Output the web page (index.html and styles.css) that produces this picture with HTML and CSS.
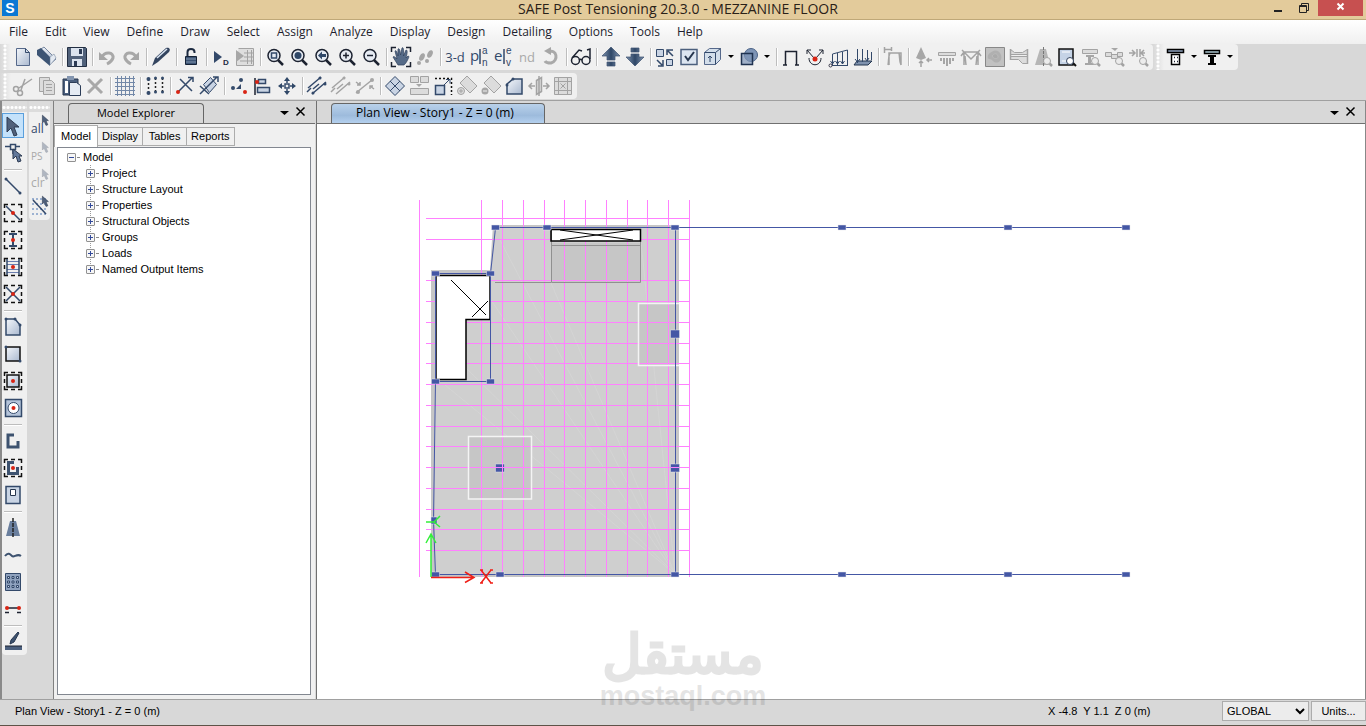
FILE: index.html
```
<!DOCTYPE html>
<html lang="en">
<head>
<meta charset="utf-8">
<title>SAFE Post Tensioning 20.3.0 - MEZZANINE FLOOR</title>
<link rel="stylesheet" href="styles.css">
</head>
<body>
<svg class="defs" aria-hidden="true">
  <defs>
    <linearGradient id="steel" x1="0" y1="0" x2="1" y2="1"><stop offset="0" stop-color="#f4f7fb"/><stop offset="1" stop-color="#a9b8cf"/></linearGradient>
    <linearGradient id="deep" x1="0" y1="0" x2="1" y2="0"><stop offset="0" stop-color="#7f93af"/><stop offset=".5" stop-color="#2f4767"/><stop offset="1" stop-color="#7f93af"/></linearGradient>
    <g id="lens"><path class="k w2" d="M15 15l5 5"/><circle cx="11" cy="10.500" r="6" fill="#e6ebf3" stroke="#1c2230" stroke-width="1.500"/></g>
    <g id="glens"><path class="g w2" d="M18 18l3 3"/><circle cx="16" cy="16" r="3.500" fill="#ececec" stroke="#a3a3a3"/></g>
    <path id="arrow" d="M4 2v13l3-3 3 7 3-1-3-7h4z" fill="#50617c" stroke="#2d3b52"/>
    <path id="frame" d="M3.500 7V3.500H7M10 3.500h4M17 3.500h3.500V7M20.500 10v4M20.500 17v3.500H17M14 20.500h-4M7 20.500H3.500V17M3.500 14v-4" fill="none" stroke="#111" stroke-width="1.500"/>
    <path id="drop" d="M3 10h6l-3 3z" fill="#000"/>
  </defs>
</svg>

<header class="titlebar">
  <svg class="app-icon" viewBox="0 0 16 16" role="img" aria-label="SAFE"><rect width="16" height="16" fill="#0a78d4"/><text x="8" y="13" text-anchor="middle" class="app-letter">S</text></svg>
  <h1 class="title">SAFE Post Tensioning 20.3.0 - MEZZANINE FLOOR</h1>
  <div class="window-buttons">
    <button class="wb" aria-label="Minimize"><svg width="26" height="16"><path d="M8 9h8" stroke="#222" stroke-width="2"/></svg></button>
    <button class="wb" aria-label="Restore"><svg width="26" height="16"><path d="M7.500 3.500h7v7h-7zM7 4.500h8M9.500 3V1.500h7v7H15" fill="none" stroke="#222"/></svg></button>
    <button class="wb close" aria-label="Close"><svg width="45" height="16"><path d="M19.500 3.500l6 6M25.500 3.500l-6 6" stroke="#fff" stroke-width="2"/></svg></button>
  </div>
</header>

<nav class="menubar" aria-label="Main menu">
  <button>File</button><button>Edit</button><button>View</button><button>Define</button><button>Draw</button><button>Select</button><button>Assign</button><button>Analyze</button><button>Display</button><button>Design</button><button>Detailing</button><button>Options</button><button>Tools</button><button>Help</button>
</nav>

<div class="toolbars">
  <div class="toolrow">
    <div class="strip" role="toolbar" aria-label="Standard">
      <span class="grip"></span>
      <button aria-label="New model"><svg><path d="M5.500 3.500h9l4 4v13h-13z" fill="url(#steel)" stroke="#55688a"/><path class="n" d="M14.500 3.500v4h4"/></svg></button>
      <button aria-label="Open"><svg><path d="M3 6l6-4 12 12-6 5z" fill="url(#steel)" stroke="#7888a0"/><path d="M2 5l4-2 9 9v9L2 10z" fill="#3c5474"/><path d="M15 12l4-3 2 4-6 7z" fill="#e4eaf2" stroke="#667890" stroke-width=".5"/></svg></button>
      <i class="sep"></i>
      <button aria-label="Save"><svg><path d="M2.500 2.500h18l1 1v18h-19z" fill="#50617a" stroke="#222e42"/><path fill="#dbe3ee" d="M6 3h12v8H6zM7 14h10v7H7z"/><path fill="#2c3b54" d="M14 4h3v5h-3zM9 16h3v5H9z"/></svg></button>
      <i class="sep"></i>
      <button aria-label="Undo"><svg><path d="M7 12c3-6 12-5 11 1-1 3-4 5-6 6" fill="none" stroke="#a8a8a8" stroke-width="3"/><path class="gf" d="M4 7v8h9z"/></svg></button>
      <button aria-label="Redo"><svg><path d="M17 12c-3-6-12-5-11 1 1 3 4 5 6 6" fill="none" stroke="#a8a8a8" stroke-width="3"/><path class="gf" d="M20 7v8h-9z"/></svg></button>
      <i class="sep"></i>
      <button aria-label="Edit"><svg><path d="M3 21l3-8L17 3c3-1 5 1 3 4L9 17z" fill="#33445f"/><path d="M8 13l10-9" stroke="#dce6f3" stroke-width="1.500"/></svg></button>
      <i class="sep"></i>
      <button aria-label="Lock model"><svg><path d="M8.500 12V7c0-4 7-4 7 0v1" fill="none" stroke="#1c2a40" stroke-width="2"/><path d="M6.500 11.500h11v8h-11z" fill="#3c5474" stroke="#152236"/><path d="M7 14h10M7 17h10" stroke="#8094ae"/></svg></button>
      <i class="sep"></i>
      <button aria-label="Run analysis and design"><svg><path fill="#33496a" d="M5 6l8 6-8 6z"/><text x="14" y="20" class="mini">D</text></svg></button>
      <button aria-label="Run report"><svg><path d="M5.500 3.500h15v17H3.500v-6" fill="#dedede" stroke="#a3a3a3"/><path class="g" d="M11 8h10M11 12h10M7 16h14M14.500 5v14M18.500 5v14"/><path class="gf" d="M3 5l8 6-8 6z"/></svg></button>
      <i class="sep"></i>
      <button aria-label="Rubber band zoom"><svg><use href="#lens"/><path class="n w15" d="M8.500 8h5v5h-5z"/></svg></button>
      <button aria-label="Restore full view"><svg><use href="#lens"/><circle cx="11" cy="10.500" r="3.500" fill="#2f4767"/></svg></button>
      <button aria-label="Previous zoom"><svg><use href="#lens"/><path fill="#2f4767" d="M7 10.500l4-4V9h4v3h-4v2.500z"/></svg></button>
      <button aria-label="Zoom in"><svg><use href="#lens"/><path class="k w15" d="M8 10.500h6M11 7.500v6"/></svg></button>
      <button aria-label="Zoom out"><svg><use href="#lens"/><path class="k w15" d="M8 10.500h6"/></svg></button>
      <i class="sep"></i>
      <button aria-label="Pan"><svg><path class="k w15" d="M2.500 7V2.500H7M17 2.500h4.500V7M21.500 17v4.500H17M7 21.500H2.500V17"/><path d="M9 20l-5-8c1-1 2 0 4 2L6 6c1-1 2 0 3 5V4c1-1 2 0 2.500 6l1.500-7c1-1 2 0 1.500 8L17 5c2 0 1 4 0 8l2-2c2 0 0 3-1 5-1 2-2 3-3 4z" fill="#566b88" stroke="#2c3e59" stroke-width=".7"/></svg></button>
      <button aria-label="Walk"><svg class="gf"><ellipse cx="17" cy="9" rx="2.500" ry="4" transform="rotate(25 17 9)"/><ellipse cx="9" cy="12" rx="2.500" ry="4" transform="rotate(25 9 12)"/><circle cx="6" cy="18" r="2"/><circle cx="14" cy="16" r="2"/></svg></button>
      <i class="sep"></i>
      <button class="word" aria-label="3-d view">3-d</button>
      <button aria-label="Plan view"><svg><text x="3" y="16" class="glyph m">p</text><path class="n w15" d="M13 4v15"/><text x="15" y="9" class="glyph s">a</text><text x="15" y="21" class="glyph s">n</text></svg></button>
      <button aria-label="Elevation view"><svg><text x="3" y="16" class="glyph m">e</text><path class="n w15" d="M13 4v15"/><text x="15" y="9" class="glyph s">e</text><text x="15" y="21" class="glyph s">v</text></svg></button>
      <button class="word off" aria-label="nd view">nd</button>
      <button aria-label="Rotate view"><svg><path d="M9 7c9-4 11 9 3 11-3 0-5 0-6-2" fill="none" stroke="#a9a9a9" stroke-width="3"/><path class="gf" d="M5 6l7-4v8z"/></svg></button>
      <i class="sep"></i>
      <button aria-label="Perspective"><svg class="k w15"><circle cx="6.500" cy="15.500" r="4"/><circle cx="17" cy="15.500" r="4"/><path d="M3 13l7-8 3 1M21 14V4l-3 1M10 15c1-1 2-1 3 0"/></svg></button>
      <i class="sep"></i>
      <button aria-label="Move up"><svg><path fill="url(#deep)" stroke="#3d5270" stroke-width=".7" d="M12 2l9 9h-5v4H8v-4H3zM8 17h8v4H8z"/></svg></button>
      <button aria-label="Move down"><svg><path fill="url(#deep)" stroke="#3d5270" stroke-width=".7" d="M12 21l9-9h-5V9H8v3H3zM8 3h8v4H8z"/></svg></button>
      <i class="sep"></i>
      <button aria-label="Object shrink"><svg><path class="n lf" d="M3.500 4.500h7v7h-7zM13.500 14.500h6v6h-6z"/><path class="n w15" d="M20 11l-5-5M14 10V5h6M4 15l5 5M10 15v6H5"/></svg></button>
      <button aria-label="Set display options"><svg><path d="M4 4.500h16v15H4z" fill="#dce5f0" stroke="#4b5f7d" stroke-width="1.500"/><path d="M8 11l3 4 6-8" fill="none" stroke="#26364e" stroke-width="2"/></svg></button>
      <button aria-label="Assign display"><svg><path d="M3.500 7.500l5-4h11v11l-5 5h-11z" fill="#d3deea" stroke="#55688a"/><path class="n" d="M3.500 7.500h11v12M14.500 7.500l5-4M9 17v-6M7 13l2-2 2 2"/></svg></button>
      <button class="dd" aria-label="More display"><svg><use href="#drop"/></svg></button>
      <button aria-label="Object view"><svg><circle cx="14" cy="10" r="6.500" fill="#7d94b6" stroke="#4b6388"/><path d="M4.500 8.500h11v11h-11z" fill="#7d94b6" fill-opacity=".7" stroke="#1f3250" stroke-width="1.500"/></svg></button>
      <button class="dd" aria-label="More views"><svg><use href="#drop"/></svg></button>
      <i class="sep"></i>
      <button aria-label="Undeformed shape"><svg><path class="k w15" d="M4 20h4M16 20h4M6.500 20V6.500h11V20"/></svg></button>
      <button aria-label="Joint loads"><svg><path class="k" d="M4 5l7 8M20 5l-7 8M4 9V5h4M20 9V5h-4M6 13c0 9 12 9 12 0"/><circle class="r" cx="12" cy="14" r="2.500"/></svg></button>
      <button aria-label="Frame loads"><svg><path class="n" d="M3 20.500h18M5.500 20V9l15-4v15M10.500 8v12M15.500 7v12M3.500 16l2 3 2-3M8.500 16l2 3 2-3M13.500 16l2 3 2-3"/><circle cx="3.500" cy="20.500" r="1.500" fill="#fff" stroke="#334"/></svg></button>
      <button aria-label="Slab loads"><svg><path d="M3 20l3-4h15l-4 4z" fill="#7f92ae" stroke="#243650"/><path class="n" d="M6.500 4v14M11.500 4v13M16.500 5v11M20.500 7v8M4 14l2.500 3L9 14M14 13l2 3 2-3"/></svg></button>
      <i class="sep"></i>
      <button aria-label="Deformed shape"><svg class="g w15"><path d="M3.500 2v6M3.500 4.500h7M10.500 2v4M8 20V8h12v12M7 20c1-5 0-8 2-12M18 8c1 4 0 8 2 12"/></svg></button>
      <i class="sep"></i>
      <button aria-label="Reactions"><svg><path class="gf" d="M10 2l5 11-5 2-5-2z"/><path class="g w15" d="M10 22v-6M8 18l2-2 2 2M21 15h-5M18 13l-2 2 2 2"/></svg></button>
      <button aria-label="Soil pressure"><svg><path d="M3.500 7.500h17v3h-17z" class="g lg"/><path class="gf" d="M5 13h2v3H5zM8 13h2v6H8zM11 13h2v8h-2zM14 13h2v6h-2zM17 13h2v3h-2z"/></svg></button>
      <button aria-label="Frame forces"><svg class="g w15"><path d="M5 20V7h14v13M3 5l2 2-3 4M21 5l-2 2 3 4M5 7l7 7 7-7M7 20l-1-9M17 20l1-9"/></svg></button>
      <button aria-label="Slab stresses"><svg><path d="M2.500 2.500h19v19h-19z" fill="#c1c1c1" stroke="#888"/><path fill="#b0b0b0" d="M5 10c5-6 11-6 13 0s-4 10-8 6-6 0-5-6z"/><path d="M9 11c2-3 5-3 6 0s-4 4-6 0z" fill="#aaa" stroke="#bbb"/></svg></button>
      <button aria-label="Strip forces"><svg><path class="g lg" d="M3.500 4.500l4 3h8l5-3v5h-17zM3.500 11.500h17v7h-5l-4-4h-8z"/><path class="g w15" d="M3.500 4v11M20.500 4v15"/></svg></button>
      <button aria-label="Punching shear"><svg><path fill="#b6b6b6" d="M9 4h6l4 16H4z"/><path d="M12.500 2v20" stroke="#777" stroke-dasharray="3 1"/><use href="#glens"/></svg></button>
      <button aria-label="Slab design"><svg><path d="M4 4h14v16H4z" fill="#c5d3e6" stroke="#111" stroke-width="1.500"/><path d="M7 7h8M7 16h5" stroke="#fff"/><path d="M17 17l4 4" stroke="#111" stroke-width="2"/><circle cx="15" cy="16" r="3.500" fill="#fff" stroke="#34445f"/></svg></button>
      <button aria-label="Beam design"><svg><path class="g lg" d="M3.500 4.500h15v4h-15z"/><path class="gf" d="M7 10h8v2h-3v6h3v2H6v-2h3v-6H7z"/><use href="#glens"/></svg></button>
      <button aria-label="Section cut"><svg><path class="g lg" d="M2.500 7.500h6v4h-6zM8.500 9.500h6v4h-6zM14.500 7.500h5v4h-5z"/><path class="gf" d="M8 3h7l-3 3z"/><use href="#glens"/></svg></button>
      <button aria-label="Crack width"><svg><path class="g w15" d="M2 8h6M18 8h-4M10 4v8M13 4v8M5 5l3 3-3 3M17 5l-3 3 3 3"/><use href="#glens"/></svg></button>
    </div>
    <div class="strip second" role="toolbar" aria-label="Detailing">
      <span class="grip"></span>
      <button aria-label="Column section"><svg><path d="M3.500 4.500h16v3h-16z" fill="#8fa2be" stroke="#000" stroke-width="1.500"/><path d="M7.500 9.500h8v10h-8z" fill="#fff" stroke="#000" stroke-width="1.500"/><path class="k w15" stroke-dasharray="1 2" d="M10 12.500h4M10 16.500h4"/></svg></button>
      <button class="dd" aria-label="Column options"><svg><use href="#drop"/></svg></button>
      <button aria-label="Beam section"><svg><path d="M4.500 5.500h15v3h-15z" fill="#a9c3cc" stroke="#000" stroke-width="1.500"/><path d="M8 10h8v2h-2v6h2v2H8v-2h2v-6H8z"/></svg></button>
      <button class="dd" aria-label="Beam options"><svg><use href="#drop"/></svg></button>
    </div>
  </div>
  <div class="toolrow">
    <div class="strip" role="toolbar" aria-label="Edit">
      <span class="grip"></span>
      <button aria-label="Cut"><svg class="g w15"><path d="M8 14l13-9M10 16l4-11"/><circle cx="5" cy="15" r="2.500"/><circle cx="9" cy="19" r="2.500"/></svg></button>
      <button aria-label="Copy"><svg class="g"><path class="lg" d="M4.500 3.500h10v14h-10z"/><path class="lg" d="M8.500 6.500h8l3 3v11h-11z"/><path d="M11 10.500h6M11 13.500h6M11 16.500h6"/></svg></button>
      <button aria-label="Paste"><svg><path d="M4 5h15v16H4z" fill="#4a5f7e" stroke="#26364e"/><path fill="#8496b0" d="M8 2h7v4H8z"/><path fill="#fff" d="M6 7h3v12H6z"/><path d="M10.500 8.500h7l4 3v10h-11z" fill="#e5ebf3" stroke="#2b3c57"/></svg></button>
      <button aria-label="Delete"><svg><path d="M5 5l14 14M19 5L5 19" fill="none" stroke="#a8a8a8" stroke-width="3"/></svg></button>
      <i class="sep"></i>
      <button aria-label="Edit grid"><svg><path stroke="#7288a8" fill="none" d="M2 4.500h20M2 8.500h20M2 12.500h20M2 16.500h20M2 20.500h20M4.500 2v20M8.500 2v20M12.500 2v20M16.500 2v20M20.500 2v20"/></svg></button>
      <i class="sep"></i>
      <button aria-label="Replicate"><svg><path d="M5.500 5v14M12.500 4v14M19.500 4v14" stroke="#222" stroke-width="1.500" stroke-dasharray="2 2"/><g fill="#344b6b"><circle cx="5.500" cy="5" r="2"/><circle cx="5.500" cy="19" r="2"/><circle cx="12.500" cy="4" r="1.500"/><circle cx="12.500" cy="18" r="1.500"/><circle cx="19.500" cy="4" r="1.500"/><circle cx="19.500" cy="18" r="1.500"/></g></svg></button>
      <i class="sep"></i>
      <button aria-label="Extrude points"><svg><path class="n w15" d="M5 18L19 4M15 3.500h5V8M7 5l12 12"/><circle class="r" cx="5" cy="18" r="2"/></svg></button>
      <button aria-label="Extrude lines"><svg><path class="n lf" d="M6.500 10.500l7-7 6 7-7 8z"/><path class="n w15" d="M3 12l9 8M3 20L20 3M16 3h5v5"/></svg></button>
      <i class="sep"></i>
      <button aria-label="Merge joints"><svg><path class="nf" d="M9 15l5-5v5z"/><g fill="#344b6b"><circle cx="6" cy="14" r="2"/><circle cx="14" cy="6" r="2"/></g><circle class="r" cx="18" cy="18" r="2"/></svg></button>
      <button aria-label="Align joints"><svg><path class="k w15" d="M4 4v17"/><path class="n lf w15" d="M7.500 5.500h7v4h-7zM6.500 13.500h12v5h-12z"/><circle class="r" cx="6" cy="8" r="2"/></svg></button>
      <button aria-label="Move joints"><svg><path fill="#2f4767" d="M12 3l3 4H9zM12 21l3-4H9zM3 12l4-3v6zM21 12l-4-3v6z"/><path class="n w15" d="M10 10h4v4h-4zM12 6v3M12 15v3M6 12h3M15 12h3"/></svg></button>
      <i class="sep"></i>
      <button aria-label="Divide lines"><svg><path class="n w15" d="M3 14L16 3M7 20L21 8M8 15l6-5M2 18l4-4"/><circle class="nf" cx="15" cy="4" r="1.500"/><circle class="nf" cx="20" cy="10" r="1.500"/><circle class="nf" cx="8" cy="19" r="1.500"/></svg></button>
      <button aria-label="Join lines"><svg><path class="g w15" d="M3 14L16 3M7 20L21 8M8 15l6-5M2 18l4-4"/><circle class="gf" cx="15" cy="4" r="1.500"/><circle class="gf" cx="20" cy="10" r="1.500"/></svg></button>
      <button aria-label="Trim lines"><svg><path class="g w15" d="M3 19l6-5 10-8M3 8l4 3M7 8v3H4M21 15l-4-3M17 15v-3h3"/><circle class="gf" cx="19" cy="6" r="2"/><circle class="gf" cx="5" cy="18" r="2"/></svg></button>
      <i class="sep"></i>
      <button aria-label="Divide areas"><svg><path class="n lf" d="M2.500 12L12 2.500l9.500 9.500-9.500 9.500zM7 7l10 10M17 7L7 17"/></svg></button>
      <button aria-label="Merge areas"><svg><path class="g lg" d="M3.500 2.500h8v6h-8zM13.500 2.500h8v6h-8zM3.500 14.500h18v6h-18z"/><path class="gf" d="M9 10h6l-3 3z"/></svg></button>
      <button aria-label="Expand areas"><svg><path d="M4 4.500h16.500V21" fill="none" stroke="#111" stroke-width="1.500" stroke-dasharray="2 2"/><path class="n lf w15" d="M4.500 11.500h9v9h-9z"/><path class="n" d="M13 11l6-6M15 5.500h4v4"/></svg></button>
      <button aria-label="Add to area"><svg><path class="g lg" d="M5 9l7-7 10 10-7 7z"/><circle class="g lg" cx="6" cy="17" r="3.500"/><path class="g" d="M4 17h4M6 15v4"/></svg></button>
      <button aria-label="Remove from area"><svg><path class="g lg" d="M5 9l7-7 10 10-7 7z"/><circle class="gf" cx="6" cy="17" r="3.500"/><path stroke="#eee" d="M4 17h4"/></svg></button>
      <button aria-label="Area edges"><svg><path d="M4 10l6-5h9v15H4z" fill="url(#steel)" stroke="#33496a" stroke-width="1.500"/><circle class="nf" cx="4" cy="11" r="1.500"/><circle class="nf" cx="10" cy="5" r="1.500"/></svg></button>
      <button aria-label="Mirror"><svg class="g w15"><path class="lg" d="M9.500 6.500l5-3v14l-5 3z"/><path d="M3 12h5M5 9l-3 3 3 3M12 2v20M21 12h-5M19 9l3 3-3 3"/></svg></button>
      <button aria-label="Area mesh"><svg class="g"><path class="lg" d="M3.500 3.500h17v17h-17z"/><path d="M7.500 7.500h9v9h-9zM7.500 4v16M16.500 4v16M4 7.500h16M4 16.500h16M9.500 9.500l5 5M14.500 9.500l-5 5"/></svg></button>
    </div>
  </div>
</div>

<div class="workspace">
  <aside class="dock">
    <div class="vstrip" role="toolbar" aria-label="Draw">
      <span class="hgrip"></span>
      <button class="on" aria-label="Select object"><svg><path transform="translate(3 1)" d="M3 2v15l4-4 3 8 3-1-3-8h5z" fill="#50617c" stroke="#2d3b52"/></svg></button>
      <button aria-label="Reshape object"><svg><path class="n w15" d="M4 5.500h5M14 5.500h5M9.500 3.500h5v5h-5zM12 9v4"/><path transform="translate(9 7)" d="M3 1v10l3-3 2 6 3-1-2-5h3z" fill="#62789a" stroke="#2d3b52"/></svg></button>
      <i class="vsep"></i>
      <button aria-label="Draw line"><svg><path class="n w15" d="M5 5l14 14"/><circle class="nf" cx="5" cy="5" r="1.500"/><circle class="nf" cx="19" cy="19" r="1.500"/></svg></button>
      <button aria-label="Quick draw line"><svg><use href="#frame"/><path class="n w15" d="M5 5l14 14"/><circle class="r" cx="12" cy="12" r="2"/></svg></button>
      <button aria-label="Quick draw column"><svg><use href="#frame"/><path class="nf" d="M8 5h8v2h-3v10h3v2H8v-2h3V7H8z"/><circle class="r" cx="12" cy="12" r="2"/></svg></button>
      <button aria-label="Quick draw secondary beams"><svg><use href="#frame"/><path stroke="#6c7fb0" d="M6 6.500h12M6 9.500h12M6 14.500h12M6 17.500h12"/><path class="n w15" d="M6 4v16M18 4v16"/><circle class="r" cx="12" cy="12" r="2"/></svg></button>
      <button aria-label="Quick draw braces"><svg><use href="#frame"/><path class="n w15" d="M5 5l14 14M19 5L5 19"/><circle class="r" cx="12" cy="12" r="2"/></svg></button>
      <i class="vsep"></i>
      <button aria-label="Draw slab"><svg><path d="M5 4h9l5 6v10H5z" fill="url(#steel)" stroke="#33496a" stroke-width="1.500"/><circle class="nf" cx="5" cy="4" r="1.500"/><circle class="nf" cx="14" cy="4" r="1.500"/><circle class="nf" cx="19" cy="10" r="1.500"/></svg></button>
      <button aria-label="Draw rectangular slab"><svg><path d="M5 5h14v14H5z" fill="url(#steel)" stroke="#111" stroke-width="1.500"/><circle class="nf" cx="5" cy="5" r="1.500"/><circle class="nf" cx="19" cy="19" r="1.500"/></svg></button>
      <button aria-label="Quick draw slab"><svg><use href="#frame"/><path d="M6 6h12v12H6z" fill="url(#steel)" stroke="#111" stroke-width="1.500"/><circle class="r" cx="12" cy="12" r="2"/></svg></button>
      <button aria-label="Quick draw around point"><svg><path d="M4.500 3.500h16v17h-16z" fill="#b5c4da" stroke="#33496a" stroke-width="1.500"/><circle cx="12.500" cy="12" r="5.500" fill="#fff" stroke="#33496a"/><circle class="r" cx="12.500" cy="12" r="2"/></svg></button>
      <i class="vsep"></i>
      <button aria-label="Draw wall"><svg><path d="M13 6H7v12h10v-6" fill="none" stroke="#3d526f" stroke-width="3"/></svg></button>
      <button aria-label="Quick draw wall"><svg><use href="#frame"/><path d="M13 6.500H7.500v11h9V11" fill="none" stroke="#3d526f" stroke-width="3"/><circle class="r" cx="12" cy="12" r="2"/></svg></button>
      <button aria-label="Draw opening"><svg><path class="n lf w15" d="M5 3.500h14v17H5z"/><path d="M9.500 6.500h5v6h-5z" fill="#fff" stroke="#26364e"/></svg></button>
      <i class="vsep"></i>
      <button aria-label="Draw strip"><svg><path fill="#6a7f9e" d="M9 5h6l4 15H5z"/><path d="M12 2v20" stroke="#222" stroke-width="1.500" stroke-dasharray="4 1"/></svg></button>
      <button aria-label="Draw tendon"><svg><path d="M4 13c3-4 5-2 7 0s5-3 9 0" fill="none" stroke="#3d526f" stroke-width="2"/></svg></button>
      <button aria-label="Draw piles"><svg><path d="M4.500 3.500h15v17h-15z" fill="#8fa2be" stroke="#33496a"/><path class="n lf" d="M6.500 6.500h2v2h-2zM11 6.500h2v2h-2zM15.500 6.500h2v2h-2zM6.500 11h2v2h-2zM11 11h2v2h-2zM15.500 11h2v2h-2zM6.500 15.500h2v2h-2zM11 15.500h2v2h-2zM15.500 15.500h2v2h-2z"/></svg></button>
      <button aria-label="Draw dimension"><svg><path class="k w15" d="M6 11h12M4 15.500h4M16 15.500h4"/><circle class="r" cx="6" cy="11" r="2"/><circle class="r" cx="18" cy="11" r="2"/></svg></button>
      <i class="vsep"></i>
      <button aria-label="Draw sketch"><svg><path d="M9 14l1-4 7-8 1 1-5 9z" fill="#3d526f" stroke="#26364e"/><path fill="#4b5f7d" d="M4 16h17v4H4z"/><path class="k" d="M4 16h17"/></svg></button>
    </div>
    <div class="vstrip narrow" role="toolbar" aria-label="Select">
      <span class="hgrip"></span>
      <button aria-label="Select all"><svg><text x="1" y="19" class="glyph xs">all</text><use href="#arrow" transform="translate(10 0) scale(.6)"/></svg></button>
      <button aria-label="Previous selection"><svg><text x="1" y="19" class="glyph off ps">PS</text><use href="#arrow" opacity=".4" transform="translate(10 0) scale(.6)"/></svg></button>
      <button aria-label="Clear selection"><svg><text x="1" y="19" class="glyph off xs">clr</text><use href="#arrow" opacity=".4" transform="translate(10 0) scale(.6)"/></svg></button>
      <button aria-label="Select by intersecting line"><svg><path stroke="#9db2d2" stroke-width="2" stroke-dasharray="2 2" d="M2 4h14M2 9h14M2 14h14M2 19h14"/><path class="n w15" d="M3 5l13 14"/><use href="#arrow" transform="translate(10 0) scale(.6)"/></svg></button>
    </div>
  </aside>

  <section class="explorer" aria-label="Model Explorer">
    <div class="panehead">
      <h2 class="panetab">Model Explorer</h2>
      <div class="panetools">
        <button aria-label="Explorer menu"><svg width="16" height="16"><path d="M3 7h9l-4.500 4z"/></svg></button>
        <button aria-label="Close explorer"><svg width="16" height="16"><path d="M3.500 3.500l8 8M11.500 3.500l-8 8" stroke="#000" stroke-width="1.500"/></svg></button>
      </div>
    </div>
    <div class="tabs" role="tablist">
      <button role="tab" aria-selected="true" class="active">Model</button><button role="tab">Display</button><button role="tab">Tables</button><button role="tab">Reports</button>
    </div>
    <div class="treebox">
      <div class="node root"><button class="tog" aria-label="Collapse Model"></button><span>Model</span></div>
      <ul class="tree">
        <li class="node"><button class="tog plus" aria-label="Expand Project"></button><span>Project</span></li>
        <li class="node"><button class="tog plus" aria-label="Expand Structure Layout"></button><span>Structure Layout</span></li>
        <li class="node"><button class="tog plus" aria-label="Expand Properties"></button><span>Properties</span></li>
        <li class="node"><button class="tog plus" aria-label="Expand Structural Objects"></button><span>Structural Objects</span></li>
        <li class="node"><button class="tog plus" aria-label="Expand Groups"></button><span>Groups</span></li>
        <li class="node"><button class="tog plus" aria-label="Expand Loads"></button><span>Loads</span></li>
        <li class="node"><button class="tog plus" aria-label="Expand Named Output Items"></button><span>Named Output Items</span></li>
      </ul>
    </div>
  </section>

  <main class="view">
    <div class="panehead">
      <h2 class="panetab blue">Plan View - Story1 - Z = 0 (m)</h2>
      <div class="panetools">
        <button aria-label="View menu"><svg width="16" height="16"><path d="M3 7h9l-4.500 4z"/></svg></button>
        <button aria-label="Close view"><svg width="16" height="16"><path d="M3.500 3.500l8 8M11.500 3.500l-8 8" stroke="#000" stroke-width="1.500"/></svg></button>
      </div>
    </div>
    <svg class="plan" role="img" aria-label="Plan of Story1">
      <g transform="translate(-317 -124)">
        <path d="M493 225H679V577H431V270H490z" fill="#c6c6c6"/>
        <path d="M496 228H676V574H435V274H491z" fill="#cfcfcf"/>
        <g fill="none" stroke="#d4d4d4"><path d="M675 574L445 385M675 574L466 368M675 574L491 300M675 574L500 240M675 574L551 283M675 574L641 242"/></g>
        <path d="M551 243h90v39h-90zM638 303h41v62h-41z" fill="#c6c6c6"/>
        <path d="M468.500 436.500h63v62h-63z" fill="#c6c6c6"/>
        <g fill="#ff80ff" class="grid">
          <path d="M419 200h1v377h-1zM481 200h1v377h-1zM502 200h1v377h-1zM523 200h1v377h-1zM544 200h1v377h-1zM564 200h1v377h-1zM585 200h1v377h-1zM606 200h1v377h-1zM627 200h1v377h-1zM647 200h1v377h-1zM668 200h1v377h-1zM689 200h1v377h-1z"/>
          <path d="M426 218h264v1H426zM426 239h264v1H426zM426 280h264v1H426zM426 301h264v1H426zM426 322h264v1H426zM426 343h264v1H426zM426 363h264v1H426zM426 384h264v1H426zM426 405h264v1H426zM426 426h264v1H426zM426 446h264v1H426zM426 467h264v1H426zM426 488h264v1H426zM426 509h264v1H426zM426 529h264v1H426zM426 550h264v1H426z"/>
        </g>
        <path d="M551 229h89v12h-89zM436 276h54v43h-24v60h-30z" fill="#fff"/>
        <g fill="none" stroke="#909090"><path d="M551.500 229v53.500h89V241M551 245.500h90M495 282.500h56"/></g>
        <g fill="none" stroke="#f4f4f4" stroke-width="1.500"><path d="M679 303.500h-40.500v62H679M468.500 436.500h63v62.500h-63z"/></g>
        <g fill="none" stroke="#000"><path stroke-width="1.500" d="M551 229.500h89.500v11.500H551zM436 275.500h54v44h-24v60h-30z"/><path d="M560 230l73 10M560 240l73-10M451 280l35 35M488 301l-16 16"/></g>
        <path d="M495.500 227.500H1126M495.500 228l-5 45.500h-55M490.500 273.500v108h-55M435.500 273.500v108l-2 139 2 54H1126M675.500 228V574" fill="none" stroke="#4457a5"/>
        <g fill="#4457a5" stroke="#e6e6ea" stroke-width=".5">
          <path d="M491.500 225h8v5h-8zM543 225h8v5h-8zM671 225h8v5h-8zM431.500 271h8v5h-8zM486.500 271h8v5h-8zM431.500 379h8v5h-8zM486.500 379h8v5h-8zM670.500 330h9v8h-9zM670.500 464h9v8h-9zM495.500 464h9v8h-9zM431 517h6v7h-6zM431.500 572h8v5h-8zM496 572h8v5h-8zM671 572h8v5h-8zM838 225h8v5h-8zM1004 225h8v5h-8zM1122 225h8v5h-8zM838 572h8v5h-8zM1004 572h8v5h-8zM1122 572h8v5h-8z"/>
        </g>
        <path d="M495 467.500h10M671 467.500h8M502.500 464v8" stroke="#ff80ff"/>
        <g fill="none" stroke="#33f03a" stroke-width="1.500"><path d="M431 577V534M426 543l5-9 5 9M426 522h8l6-6M434 522l6 5"/></g>
        <g fill="none" stroke="#f02018" stroke-width="1.500"><path d="M431 577.500h43M465 572l9 5.500-9 5M481 570l10 13M491 570l-10 13M480 570h3M490 570h3M480 583h3M490 583h3"/></g>
      </g>
    </svg>
  </main>
</div>

<footer class="status">
  <span class="where">Plan View - Story1 - Z = 0 (m)</span>
  <span class="coords">X -4.8&nbsp; Y 1.1&nbsp; Z 0 (m)</span>
  <select aria-label="Coordinate system"><option>GLOBAL</option></select>
  <button>Units...</button>
</footer>
<div class="watermark"><span class="wm-ar" lang="ar" dir="rtl">مستقل</span><span class="wm-en">mostaql.com</span></div>
</body>
</html>
```
FILE: styles.css
```
* { box-sizing: border-box; }
html, body { height: 100%; }
body {
  margin: 0; display: flex; flex-direction: column; min-height: 0; overflow: hidden; position: relative;
  background: #d8d8d8; color: #000; font: 11px/16px "Liberation Sans", Arial, sans-serif;
  border-bottom: 1px solid #5e5348;
}
button { border: 0; padding: 0; margin: 0; background: none; color: inherit; font: inherit; }
h1, h2, ul { margin: 0; padding: 0; font-weight: normal; }
.defs { position: absolute; width: 0; height: 0; }
svg { display: block; flex: none; }

/* shared icon paint */
.n { stroke: #33496a; fill: none; }
.k { stroke: #1c2230; fill: none; }
.g { stroke: #a3a3a3; fill: none; }
.lf { fill: #c9d4e4; }
.lg { fill: #dcdcdc; }
.nf { fill: #33496a; }
.gf { fill: #a6a6a6; }
.r { fill: #d92414; }
.w15 { stroke-width: 1.5; }
.w2 { stroke-width: 2.5; }
.mini { font: bold 8px "Liberation Sans", sans-serif; fill: #222c40; }
.glyph { font: 15px "Open Sans", sans-serif; fill: #33496a; }
.glyph.s { font: 10px "Liberation Sans", sans-serif; }
.glyph.xs { font-size: 12px; }
.glyph.ps { font-size: 10px; }
.glyph.off { fill: #a9a9a9; }
.grid { shape-rendering: crispEdges; }

.titlebar { flex: none; height: 20px; display: flex; background: #e3cb9b; border-bottom: 1px solid #bfa878; }
.app-icon { width: 16px; height: 16px; margin-left: 2px; }
.app-letter { font: bold 14px "Liberation Sans", sans-serif; fill: #fff; }
.title { flex: 1; padding-left: 72px; text-align: center; font: 14px/18px "Open Sans", "Noto Sans", sans-serif; color: #2a2118; }
.window-buttons { display: flex; margin-right: 3px; }
.close { background: #c75050; height: 16px; }

.menubar { flex: none; height: 24px; display: flex; gap: 17px; padding-left: 9px; background: linear-gradient(#fff, #f0f0f0); }
.menubar button { font: 12px/24px "Open Sans", "Noto Sans", sans-serif; color: #1e1e2e; }

.toolbars { flex: none; display: flex; flex-direction: column; gap: 3px; padding-bottom: 1px; border-bottom: 1px solid #a0a0a0; }
.toolrow { display: flex; height: 26px; }
.strip { display: flex; align-items: center; background: #f0f0f0; border-radius: 0 4px 4px 0; padding-right: 2px; }
.strip button { width: 24px; height: 24px; }
.strip svg { width: 24px; height: 24px; }
.strip .dd, .strip .dd svg { width: 12px; }
.strip .word { font: 13px/24px "Open Sans", sans-serif; color: #33496a; }
.strip .word.off { color: #a9a9a9; }
.grip { width: 11px; height: 26px; background: radial-gradient(circle, #fff 1px, transparent 2px) 2px 0 / 6px 4px repeat-y, linear-gradient(90deg, #d8d8d8, #f0f0f0); }
.sep { width: 6px; height: 18px; background: linear-gradient(90deg, transparent 3px, #bdbdbd 3px, #bdbdbd 4px, #fff 4px, #fff 5px, transparent 5px); }

.workspace { flex: 1; min-height: 0; display: flex; }
.dock { flex: none; width: 52px; display: flex; align-items: flex-start; gap: 2px; border-left: 2px solid #8a8a8a; }
.vstrip { width: 25px; display: flex; flex-direction: column; align-items: flex-start; background: #f0f0f0; border-radius: 0 0 4px 4px; }
.vstrip.narrow { width: 21px; }
.hgrip { width: 100%; height: 11px; background: radial-gradient(circle, #fff 1px, transparent 2px) 0 4px / 4px 5px repeat-x, #dcdcdc; }
.vstrip button { width: 22px; height: 27px; display: flex; align-items: center; justify-content: center; }
.vstrip svg { width: 24px; height: 24px; }
.vstrip.narrow svg { width: 20px; }
.vstrip .on { background: #c4e2fb; border: 1px solid #5a9fdc; height: 25px; margin: 1px 0; }
.vsep { width: 18px; height: 6px; margin-left: 2px; background: linear-gradient(transparent 3px, #bdbdbd 3px, #bdbdbd 4px, #fff 4px, #fff 5px, transparent 5px); }

.panehead { flex: none; height: 23px; display: flex; align-items: flex-end; justify-content: space-between; padding: 0 6px 0 14px; border-bottom: 1px solid #707070; background: #d8d8d8; }
.panetab { height: 20px; width: 136px; text-align: center; border: 1px solid #666; border-bottom: 0; border-radius: 4px 4px 0 0; font: 11px/18px "Open Sans", "Noto Sans", sans-serif; }
.panetab.blue { width: 214px; font-size: 12px; padding-right: 6px; background: linear-gradient(#b9d1ea, #9dbbdc 60%, #b4d0ee); }
.panetools { display: flex; height: 100%; align-items: center; }

.explorer { flex: none; width: 262px; display: flex; flex-direction: column; margin-left: 1px; border-left: 1px solid #808080; background: #f0f0f0; }
.tabs { flex: none; display: flex; align-items: flex-end; height: 22px; margin-top: 1px; }
.tabs button { height: 19px; min-width: 44px; padding: 0 4px; border: 1px solid #acacac; border-left-width: 0; line-height: 17px; margin-bottom: 1px; }
.tabs .active { height: 22px; padding: 0 6px 2px; margin-bottom: 0; background: #fff; border-bottom: 0; border-left-width: 1px; line-height: 18px; }
.treebox { flex: 1; min-height: 0; margin: 0 4px 4px 3px; padding: 1px 8px; background: #fff; border: 1px solid #828790; }
.tree { list-style: none; margin-left: 19px; }
.node { display: flex; align-items: center; height: 16px; position: relative; }
.node span { padding-left: 7px; background: linear-gradient(#888, #888) 1px 8px / 3px 1px no-repeat; }
.tree .node { background: repeating-linear-gradient(#999 0 1px, transparent 1px 2px) 5px 0 / 1px 100% no-repeat; }
.tree .node:last-child { background-size: 1px 8px; }
.tog { width: 9px; height: 9px; margin-left: 1px; border: 1px solid #919191; border-radius: 1px; background: linear-gradient(#334a9a, #334a9a) center / 5px 1px no-repeat, #f6f6f6; }
.tog.plus { background: linear-gradient(#334a9a, #334a9a) center / 5px 1px no-repeat, linear-gradient(#334a9a, #334a9a) center / 1px 5px no-repeat, #f6f6f6; }

.view { flex: 1; min-width: 0; display: flex; flex-direction: column; margin-left: 1px; border-left: 1px solid #707070; border-right: 1px solid #888; background: #fff; }
.plan { flex: 1; width: 100%; min-height: 0; }

.status { flex: none; height: 26px; display: flex; align-items: center; padding: 0 0 3px 15px; gap: 2px; border-top: 1px solid #a0a0a0; background: #d8d8d8; }
.where { flex: 1; }
.coords { width: 172px; }
.status select, .status button { height: 20px; font: inherit; color: #000; border: 1px solid #acacac; background: #ececec; }
.status select { width: 87px; padding: 0; }
.status button { width: 55px; }

.watermark { position: absolute; left: 593px; bottom: 15px; width: 180px; display: flex; flex-direction: column; align-items: center; color: #000; opacity: .1; pointer-events: none; }
.wm-ar { font: 54px/54px "DejaVu Sans", sans-serif; -webkit-text-stroke: 3px #000; }
.wm-en { font: bold 27px/28px "Liberation Sans", Arial, sans-serif; }
```
